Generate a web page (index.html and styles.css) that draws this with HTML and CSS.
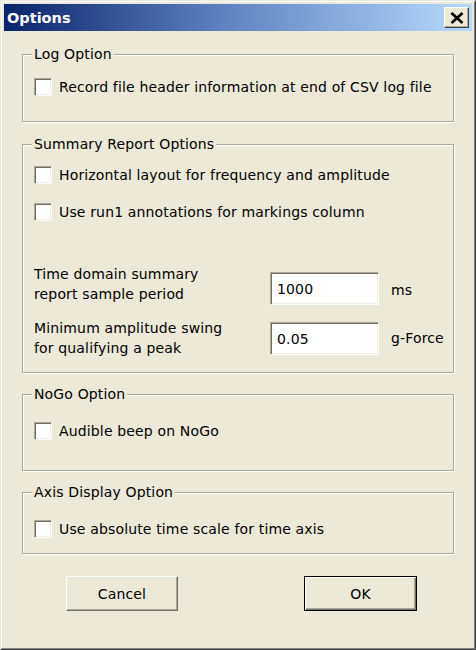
FILE: index.html
```html
<!DOCTYPE html>
<html>
<head>
<meta charset="utf-8">
<title>Options</title>
<link rel="stylesheet" href="styles.css">
</head>
<body>
<div class="window">
  <div class="frame">
    <div class="titlebar">
      <span class="title">Options</span>
      <button class="close" aria-label="Close">
        <svg width="14" height="12" viewBox="0 0 14 12"><path d="M1.5 1 L12.5 11 M12.5 1 L1.5 11" stroke="#000" stroke-width="2.6" fill="none"/></svg>
      </button>
    </div>
    <div class="content">
      <div class="group g-log">
        <span class="group-title">Log Option</span>
        <label class="check"><span class="box"></span>Record file header information at end of CSV log file</label>
      </div>
      <div class="group g-summary">
        <span class="group-title">Summary Report Options</span>
        <label class="check"><span class="box"></span>Horizontal layout for frequency and amplitude</label>
        <label class="check check-2"><span class="box"></span>Use run1 annotations for markings column</label>
        <div class="field field-1">
          <span class="field-label">Time domain summary<br>report sample period</span>
          <span class="edit">1000</span>
          <span class="unit">ms</span>
        </div>
        <div class="field field-2">
          <span class="field-label">Minimum amplitude swing<br>for qualifying a peak</span>
          <span class="edit">0.05</span>
          <span class="unit">g-Force</span>
        </div>
      </div>
      <div class="group g-nogo">
        <span class="group-title">NoGo Option</span>
        <label class="check"><span class="box"></span>Audible beep on NoGo</label>
      </div>
      <div class="group g-axis">
        <span class="group-title">Axis Display Option</span>
        <label class="check"><span class="box"></span>Use absolute time scale for time axis</label>
      </div>
      <div class="buttons">
        <button class="btn">Cancel</button>
        <button class="btn btn-default">OK</button>
      </div>
    </div>
  </div>
</div>
</body>
</html>
```

FILE: styles.css
```css
* { box-sizing: border-box; }
html, body { margin: 0; padding: 0; background: #ece9d8; }
body {
  font-family: "DejaVu Sans", sans-serif;
  font-size: 14px;
  letter-spacing: 0.15px;
  color: #000;
}
.window {
  width: 476px;
  height: 650px;
  border: 1px solid;
  border-color: #ece9d8 #404040 #404040 #ece9d8;
  display: flex;
  flex-direction: column;
}
.frame {
  flex: 1;
  border: 1px solid;
  border-color: #fff #808080 #808080 #fff;
  padding: 2px;
  display: flex;
  flex-direction: column;
}
.titlebar {
  height: 27px;
  background: linear-gradient(to right, #0a246a, #5a7fbd 45%, #b6dafd);
  display: flex;
  align-items: center;
  justify-content: space-between;
  padding: 0 3px;
}
.title {
  color: #fff;
  font-weight: bold;
  font-size: 14.5px;
  letter-spacing: 0;
}
.close {
  width: 25px;
  height: 21px;
  padding: 0;
  background: #ece9d8;
  border: 1px solid;
  border-color: #fff #404040 #404040 #fff;
  box-shadow: inset -1px -1px 0 #aca899;
  display: flex;
  align-items: center;
  justify-content: center;
}
.content {
  flex: 1;
  padding: 23px 18px 0 18px;
}
.group {
  position: relative;
  border: 1px solid #aca899;
  box-shadow: 1px 1px 0 #fff, inset 1px 1px 0 #fff;
}
.group-title {
  position: absolute;
  top: -9px;
  left: 9px;
  padding: 0 2px;
  line-height: 16px;
  background: #ece9d8;
}
.g-log { height: 68px; padding-top: 22px; }
.g-summary { height: 229px; margin-top: 22px; padding-top: 20px; }
.g-nogo { height: 77px; margin-top: 21px; padding-top: 26px; }
.g-axis { height: 62px; margin-top: 21px; padding-top: 26px; }
.check {
  display: flex;
  align-items: center;
  gap: 7px;
  height: 20px;
  padding-left: 11px;
}
.check-2 { margin-top: 17px; }
.box {
  width: 18px;
  height: 18px;
  background: #fff;
  border: 1px solid;
  border-color: #aca899 #fff #fff #aca899;
  box-shadow: inset 1px 1px 0 #716f64, inset -1px -1px 0 #f1efe2;
}
.field {
  display: flex;
  align-items: flex-start;
  padding-left: 11px;
}
.field-1 { margin-top: 42px; }
.field-2 { margin-top: 13px; }
.field-label {
  width: 236px;
  line-height: 20px;
}
.edit {
  width: 109px;
  height: 33px;
  background: #fff;
  border: 1px solid;
  border-color: #aca899 #fff #fff #aca899;
  box-shadow: inset 1px 1px 0 #716f64, inset -1px -1px 0 #f1efe2;
  padding: 0 6px;
  display: flex;
  align-items: center;
}
.field-1 .edit { margin-top: 8px; }
.field-2 .edit { margin-top: 4px; }
.unit {
  margin-left: 12px;
  line-height: 20px;
}
.field-1 .unit { margin-top: 16px; }
.field-2 .unit { margin-top: 10px; }
.buttons {
  display: flex;
  justify-content: space-between;
  margin-top: 22px;
  padding: 0 37px 0 44px;
}
.btn {
  width: 112px;
  height: 35px;
  font: inherit;
  letter-spacing: inherit;
  color: #000;
  background: #ece9d8;
  border: 1px solid;
  border-color: #fff #716f64 #716f64 #fff;
  box-shadow: inset -1px -1px 0 #aca899;
  padding: 0;
}
.btn-default {
  width: 113px;
  border: 1px solid #000;
  box-shadow: inset 1px 1px 0 #fff, inset -1px -1px 0 #716f64, inset -2px -2px 0 #aca899;
}
```
